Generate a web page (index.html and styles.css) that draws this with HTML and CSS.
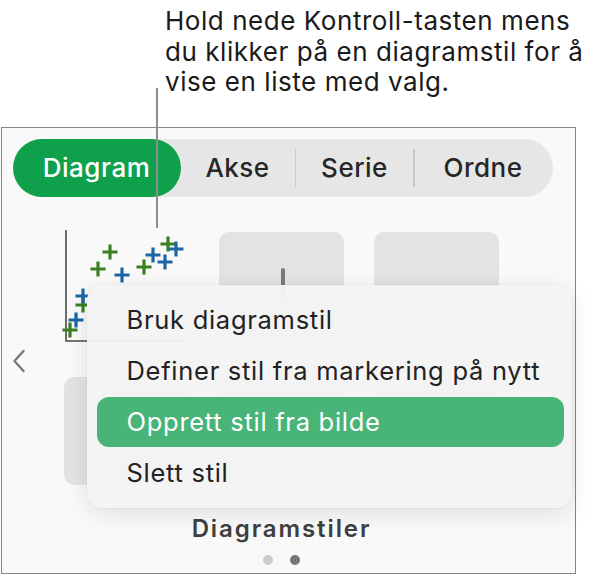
FILE: index.html
```html
<!DOCTYPE html>
<html lang="no">
<head>
<meta charset="utf-8">
<title>Diagramstiler</title>
<link rel="stylesheet" href="styles.css">
</head>
<body>
<div class="callout">Hold nede Kontroll-tasten mens<br>du klikker på en diagramstil for å<br>vise en liste med valg.</div>
<div class="panel">
  <div class="seg">
    <div class="seg-item active">Diagram</div>
    <div class="seg-item w1">Akse</div>
    <div class="seg-sep"></div>
    <div class="seg-item w2">Serie</div>
    <div class="seg-sep"></div>
    <div class="seg-item w3">Ordne</div>
  </div>
  <div class="carousel">
    <svg class="chev" width="14" height="24" viewBox="0 0 14 24"><path d="M11.5 2 L2.5 12 L11.5 22" fill="none" stroke="#7a7a7a" stroke-width="2.4" stroke-linecap="round" stroke-linejoin="round"/></svg>
    <div class="stage">
      <div class="grid">
        <div class="thumb scatter">
          <svg width="125" height="110" viewBox="0 0 125 110" class="scatter-svg">
            <path d="M2 -2 V109 H125" fill="none" stroke="#4a4a4a" stroke-width="1.6"/>
            <g stroke="#3b7f22" stroke-width="3.2">
              <path d="M38.5 20 h15 M46 12.5 v15"/>
              <path d="M26.5 37 h15 M34 29.5 v15"/>
              <path d="M72.5 35 h15 M80 27.5 v15"/>
              <path d="M96.5 12 h15 M104 4.5 v15"/>
              <path d="M-1.5 98 h15 M6 90.5 v15"/>
              <path d="M11.5 73 h15 M19 65.5 v15"/>
            </g>
            <g stroke="#1c66a6" stroke-width="3.2">
              <path d="M50.5 43 h15 M58 35.5 v15"/>
              <path d="M81.5 23 h15 M89 15.5 v15"/>
              <path d="M93.5 30 h15 M101 22.5 v15"/>
              <path d="M104.5 17 h15 M112 9.5 v15"/>
              <path d="M11.5 64 h15 M19 56.5 v15"/>
              <path d="M4.5 88 h15 M12 80.5 v15"/>
            </g>
          </svg>
        </div>
        <div class="thumb gray"><div class="bar"></div></div>
        <div class="thumb gray"></div>
        <div class="thumb gray"></div>
        <div class="thumb gray"></div>
        <div class="thumb gray"></div>
      </div>
      <div class="label">Diagramstiler</div>
      <div class="dots"><span class="dot"></span><span class="dot on"></span></div>
    </div>
  </div>
  <div class="menu">
    <div class="mi">Bruk diagramstil</div>
    <div class="mi">Definer stil fra markering på nytt</div>
    <div class="mi hl">Opprett stil fra bilde</div>
    <div class="mi">Slett stil</div>
  </div>
</div>
<div class="pointer"></div>
</body>
</html>
```
FILE: styles.css
```css
html, body { margin: 0; padding: 0; }
body {
  position: relative;
  width: 593px;
  height: 575px;
  background: #ffffff;
  font-family: Inter, "Noto Sans", sans-serif;
  color: #1d1d1f;
  overflow: hidden;
}
.callout {
  box-sizing: border-box;
  height: 127px;
  padding: 6px 0 0 165px;
  font-size: 26px;
  line-height: 30.5px;
  letter-spacing: 0.55px;
  color: #1a1a1a;
  white-space: nowrap;
}
.pointer {
  position: absolute;
  left: 156px;
  top: 88px;
  width: 2px;
  height: 140px;
  background: #8c8c8c;
}
.panel {
  position: relative;
  box-sizing: border-box;
  margin-left: 1px;
  width: 575px;
  height: 447px;
  border: 1.5px solid #858585;
  background: #f9f9f9;
}
.seg {
  display: flex;
  align-items: center;
  margin: 10.5px 0 0 10.5px;
  width: 540px;
  height: 58px;
  border-radius: 29px;
  background: #e6e6e6;
}
.seg-item {
  height: 58px;
  display: flex;
  align-items: center;
  justify-content: center;
  font-size: 26px;
  font-weight: 500;
  letter-spacing: 0.5px;
  color: #262626;
}
.seg-item.active {
  width: 168px;
  border-radius: 29px;
  background: #0ea04b;
  color: #ffffff;
}
.w1 { width: 114px; }
.w2 { width: 117px; }
.w3 { width: 137px; }
.seg-sep {
  width: 1.5px;
  height: 38px;
  background: #c9c9c9;
}
.carousel {
  display: flex;
  align-items: flex-start;
  padding-left: 9.5px;
  margin-top: 35px;
}
.chev {
  margin-top: 117px;
  flex: none;
}
.stage {
  margin-left: 38px;
  display: flex;
  flex-direction: column;
  align-items: center;
  width: 436px;
}
.grid {
  display: grid;
  grid-template-columns: repeat(3, 125px);
  grid-template-rows: 108px 108px;
  column-gap: 30px;
  row-gap: 37px;
}
.thumb {
  border-radius: 10px;
  position: relative;
}
.thumb.gray { background: #e3e3e3; }
.scatter-svg { overflow: visible; display: block; }
.bar {
  position: absolute;
  left: 62px;
  top: 36px;
  width: 4px;
  height: 30px;
  border-radius: 2px 2px 0 0;
  background: #7a7a7a;
}
.label {
  margin-top: 31px;
  font-size: 24px;
  line-height: 26px;
  font-weight: 600;
  letter-spacing: 1.9px;
  color: #3f3f3f;
}
.dots {
  display: flex;
  gap: 17px;
  margin-top: 13px;
}
.dot {
  width: 10px;
  height: 10px;
  border-radius: 50%;
  background: #cbcbcb;
}
.dot.on { background: #777777; }
.menu {
  position: absolute;
  left: 84.5px;
  top: 156.5px;
  width: 485px;
  box-sizing: border-box;
  padding: 10px 8px 10px 10px;
  border-radius: 15px;
  background: rgba(244, 244, 244, 0.96);
  box-shadow: 0 0 0 0.5px rgba(0,0,0,0.06), 0 6px 24px rgba(0,0,0,0.10);
}
.mi {
  height: 50px;
  margin-bottom: 1px;
  display: flex;
  align-items: center;
  padding-left: 30px;
  font-size: 25.5px;
  letter-spacing: 0.72px;
  color: #222222;
  border-radius: 12px;
  white-space: nowrap;
}
.mi:last-child { margin-bottom: 0; }
.mi.hl {
  background: #48b478;
  color: #ffffff;
}
```
